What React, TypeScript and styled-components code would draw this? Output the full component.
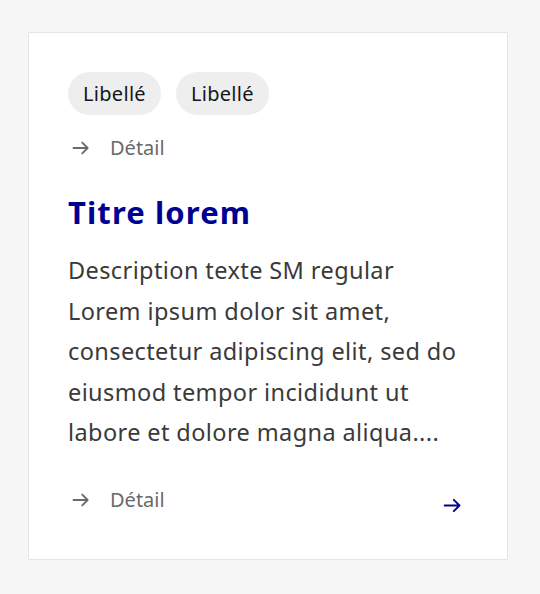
import React from "react";
import styled, { createGlobalStyle } from "styled-components";

const GlobalStyle = createGlobalStyle`
  html, body {
    margin: 0;
    padding: 0;
    background: #f6f6f6;
  }
  body {
    font-family: "Noto Sans", "Liberation Sans", sans-serif;
  }
`;

const Page = styled.div`
  padding: 32px 32px 35px 28px;
  min-height: 594px;
  box-sizing: border-box;
`;

const Card = styled.div`
  width: 480px;
  box-sizing: border-box;
  background: #ffffff;
  border: 1px solid #e5e5e5;
  padding: 39px 39px 46px;
  display: flex;
  flex-direction: column;
`;

const BadgeRow = styled.div`
  display: flex;
  gap: 15px;
`;

const Badge = styled.span`
  display: inline-flex;
  align-items: center;
  height: 43px;
  padding: 0 15px;
  border-radius: 22px;
  background: #eeeeee;
  color: #161616;
  font-size: 20px;
  letter-spacing: 0.3px;
`;

const DetailRow = styled.div<{ $top: number }>`
  display: flex;
  align-items: center;
  gap: 19px;
  margin-top: ${(p) => p.$top}px;
  color: #6a6a6a;
  font-size: 20px;
  line-height: 26px;
  padding-left: 3px;
`;

const Title = styled.h3`
  margin: 31px 0 0;
  color: #000091;
  font-size: 31px;
  font-weight: 700;
  letter-spacing: 1.1px;
  line-height: 40px;
`;

const Description = styled.p`
  margin: 18px 0 0;
  color: #3a3a3a;
  font-size: 23.5px;
  letter-spacing: 0.4px;
  line-height: 40.5px;
  white-space: nowrap;
`;

const Footer = styled.div`
  display: flex;
  justify-content: space-between;
  align-items: flex-end;
  margin-top: 34px;
`;

const Arrow = ({ color, size }: { color: string; size: number }) => (
  <svg width={size} height={size} viewBox="0 0 24 24" fill="none">
    <path
      d="M3 12h17M13.5 5.5L20 12l-6.5 6.5"
      stroke={color}
      strokeWidth={2.2}
      strokeLinecap="round"
      strokeLinejoin="round"
    />
  </svg>
);

const LinkArrow = styled.span`
  display: flex;
  margin-bottom: -3px;
  margin-right: 5px;
`;

export default function App() {
  return (
    <>
      <GlobalStyle />
      <Page>
        <Card>
          <BadgeRow>
            <Badge>Libellé</Badge>
            <Badge>Libellé</Badge>
          </BadgeRow>
          <DetailRow $top={20}>
            <Arrow color="#6a6a6a" size={20} />
            <span>Détail</span>
          </DetailRow>
          <Title>Titre lorem</Title>
          <Description>
            Description texte SM regular
            <br />
            Lorem ipsum dolor sit amet,
            <br />
            consectetur adipiscing elit, sed do
            <br />
            eiusmod tempor incididunt ut
            <br />
            labore et dolore magna aliqua....
          </Description>
          <Footer>
            <DetailRow $top={0}>
              <Arrow color="#6a6a6a" size={20} />
              <span>Détail</span>
            </DetailRow>
            <LinkArrow>
              <Arrow color="#000091" size={21} />
            </LinkArrow>
          </Footer>
        </Card>
      </Page>
    </>
  );
}
